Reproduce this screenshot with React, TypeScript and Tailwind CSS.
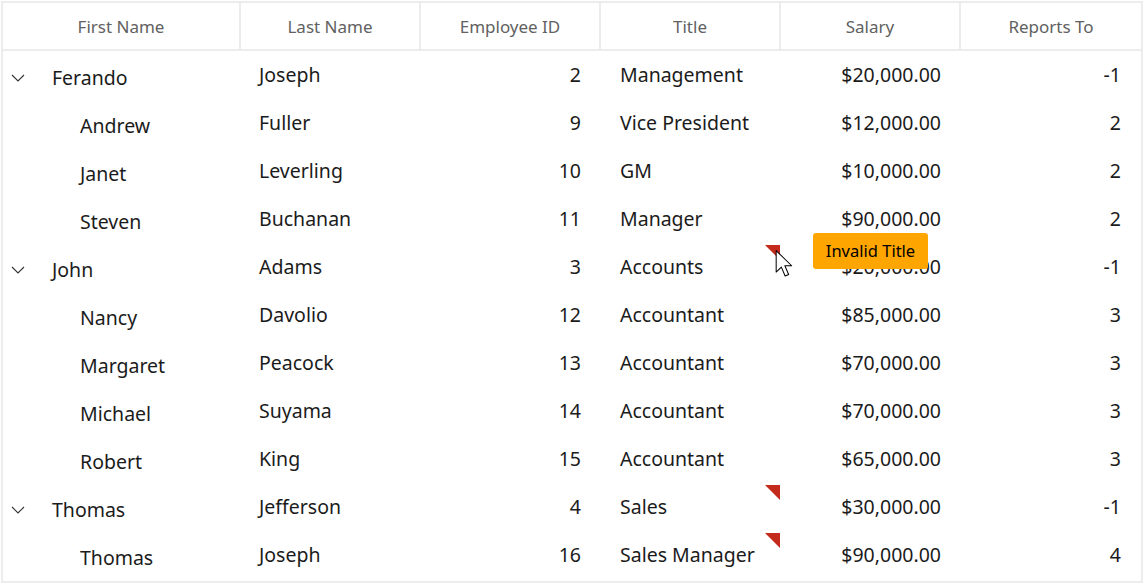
import React from "react"

type Row = {
  first: string
  last: string
  id: number
  title: string
  salary: string
  reports: number
  level: number
  flag?: boolean
}

const rows: Row[] = [
  { first: "Ferando", last: "Joseph", id: 2, title: "Management", salary: "$20,000.00", reports: -1, level: 0 },
  { first: "Andrew", last: "Fuller", id: 9, title: "Vice President", salary: "$12,000.00", reports: 2, level: 1 },
  { first: "Janet", last: "Leverling", id: 10, title: "GM", salary: "$10,000.00", reports: 2, level: 1 },
  { first: "Steven", last: "Buchanan", id: 11, title: "Manager", salary: "$90,000.00", reports: 2, level: 1 },
  { first: "John", last: "Adams", id: 3, title: "Accounts", salary: "$20,000.00", reports: -1, level: 0, flag: true },
  { first: "Nancy", last: "Davolio", id: 12, title: "Accountant", salary: "$85,000.00", reports: 3, level: 1 },
  { first: "Margaret", last: "Peacock", id: 13, title: "Accountant", salary: "$70,000.00", reports: 3, level: 1 },
  { first: "Michael", last: "Suyama", id: 14, title: "Accountant", salary: "$70,000.00", reports: 3, level: 1 },
  { first: "Robert", last: "King", id: 15, title: "Accountant", salary: "$65,000.00", reports: 3, level: 1 },
  { first: "Thomas", last: "Jefferson", id: 4, title: "Sales", salary: "$30,000.00", reports: -1, level: 0, flag: true },
  { first: "Thomas", last: "Joseph", id: 16, title: "Sales Manager", salary: "$90,000.00", reports: 4, level: 1, flag: true },
]

const headers = ["First Name", "Last Name", "Employee ID", "Title", "Salary", "Reports To"]

const Chevron = () => (
  <svg width="14" height="8" viewBox="0 0 14 8" className="shrink-0">
    <polyline points="1,1 7,7 13,1" fill="none" stroke="#333" strokeWidth="1.1" />
  </svg>
)

const Cursor = () => (
  <svg width="20" height="29" viewBox="0 0 15 23">
    <path
      d="M0.5 0.5 L0.5 17.5 L4.6 13.6 L7.6 20.6 L10.4 19.4 L7.4 12.5 L12.8 12.5 Z"
      fill="#fff"
      stroke="#000"
      strokeWidth="0.8"
      strokeLinejoin="round"
    />
  </svg>
)

export default function App() {
  return (
    <div className="relative w-[1146px] h-[585px] bg-white font-['Noto_Sans',sans-serif] text-[#1b1b1b]">
      <div className="absolute left-[1px] top-[1px] w-[1142px] h-[582px] border-2 border-[#ececec]">
        <div className="grid grid-cols-[238px_180px_180px_180px_180px_180px] h-[48px] border-b-2 border-[#ececec]">
          {headers.map((h, i) => (
            <div
              key={h}
              className={`flex items-center justify-center pt-[2px] text-[17px] text-[#616161] ${i < 5 ? "border-r-2 border-[#ececec]" : ""}`}
            >
              {h}
            </div>
          ))}
        </div>
        {rows.map((r, i) => (
          <div key={i} className="grid grid-cols-[238px_180px_180px_180px_180px_180px] h-[48px] text-[19.5px]">
            <div className="flex items-center pt-[6px]">
              {r.level === 0 ? (
                <>
                  <div className="pl-[8px] w-[49px]">
                    <Chevron />
                  </div>
                  <span>{r.first}</span>
                </>
              ) : (
                <span className="pl-[77px]">{r.first}</span>
              )}
            </div>
            <div className="flex items-center pl-[18px]">{r.last}</div>
            <div className="flex items-center justify-end pr-[20px]">{r.id}</div>
            <div className="relative flex items-center pl-[19px]">
              {r.title}
              {r.flag && (
                <svg width="15" height="15" viewBox="0 0 15 15" className="absolute right-[1px] top-[2px]">
                  <polygon points="0,0 15,0 15,15" fill="#c42b1c" />
                </svg>
              )}
            </div>
            <div className="flex items-center justify-end pr-[20px]">{r.salary}</div>
            <div className="flex items-center justify-end pr-[20px]">{r.reports}</div>
          </div>
        ))}
      </div>
      <div className="absolute left-[813px] top-[233px] w-[115px] h-[36px] rounded-[3px] bg-[#ffa500] flex items-center justify-center text-[16.5px] text-black">
        Invalid Title
      </div>
      <div className="absolute left-[775px] top-[250px]">
        <Cursor />
      </div>
    </div>
  )
}
